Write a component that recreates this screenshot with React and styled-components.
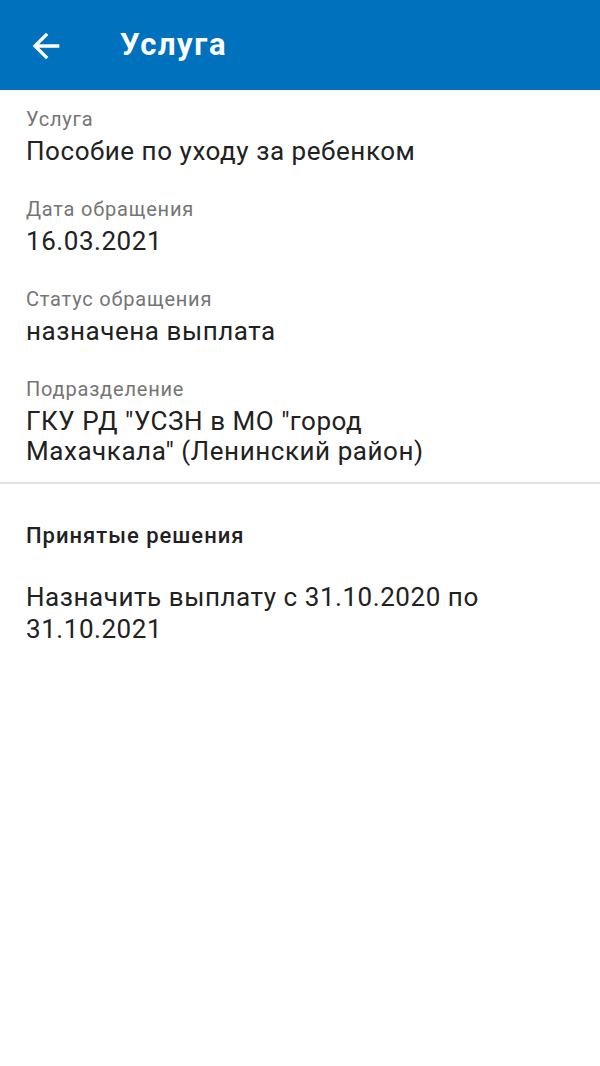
import React from "react";
import styled, { createGlobalStyle } from "styled-components";

const Global = createGlobalStyle`
  html, body { margin: 0; padding: 0; background: #ffffff; }
  body { font-family: Roboto, "Noto Sans", "Liberation Sans", sans-serif; }
  * { box-sizing: border-box; }
`;

const Screen = styled.div`
  width: 600px;
  min-height: 1066px;
  background: #ffffff;
  display: flex;
  flex-direction: column;
`;

const AppBar = styled.header`
  height: 90px;
  background: #0071bd;
  display: flex;
  align-items: center;
  padding-left: 26px;
  gap: 54px;
`;

const BackButton = styled.button`
  width: 40px;
  height: 40px;
  padding: 0;
  border: none;
  background: transparent;
  display: flex;
  align-items: center;
  justify-content: center;
  color: #ffffff;
  margin-top: 2px;
`;

const Title = styled.h1`
  margin: 0;
  font-size: 31px;
  font-weight: 700;
  letter-spacing: 1.6px;
  color: #ffffff;
  line-height: 36px;
`;

const Details = styled.section`
  display: flex;
  flex-direction: column;
  gap: 31px;
  padding: 17px 100px 16px 26px;
  border-bottom: 2px solid #e4e4e4;
`;

const Field = styled.div`
  display: flex;
  flex-direction: column;
  gap: 5px;
`;

const Label = styled.div`
  font-size: 20px;
  line-height: 24px;
  letter-spacing: 0.8px;
  color: #757575;
`;

const Value = styled.div`
  font-size: 26px;
  line-height: ${(p) => (p.$loose ? "32px" : "30px")};
  letter-spacing: 0.55px;
  color: #212121;
`;

const Decisions = styled.section`
  display: flex;
  flex-direction: column;
  gap: 32px;
  padding: 39px 100px 0 26px;
`;

const SectionTitle = styled.h2`
  margin: 0;
  font-size: 22px;
  line-height: 26px;
  font-weight: 500;
  letter-spacing: 1px;
  color: #212121;
`;

const ArrowBack = () => (
  <svg width="40" height="40" viewBox="0 0 24 24" fill="currentColor">
    <path d="M20 11H7.83l5.59-5.59L12 4l-8 8 8 8 1.41-1.41L7.83 13H20v-2z" />
  </svg>
);

const fields = [
  { label: "Услуга", value: "Пособие по уходу за ребенком" },
  { label: "Дата обращения", value: "16.03.2021" },
  { label: "Статус обращения", value: "назначена выплата" },
  {
    label: "Подразделение",
    value: 'ГКУ РД "УСЗН в МО "город Махачкала" (Ленинский район)',
  },
];

export default function App() {
  return (
    <>
      <Global />
      <Screen>
        <AppBar>
          <BackButton aria-label="Назад">
            <ArrowBack />
          </BackButton>
          <Title>Услуга</Title>
        </AppBar>
        <Details>
          {fields.map((f) => (
            <Field key={f.label}>
              <Label>{f.label}</Label>
              <Value>{f.value}</Value>
            </Field>
          ))}
        </Details>
        <Decisions>
          <SectionTitle>Принятые решения</SectionTitle>
          <Value $loose>Назначить выплату с 31.10.2020 по 31.10.2021</Value>
        </Decisions>
      </Screen>
    </>
  );
}
